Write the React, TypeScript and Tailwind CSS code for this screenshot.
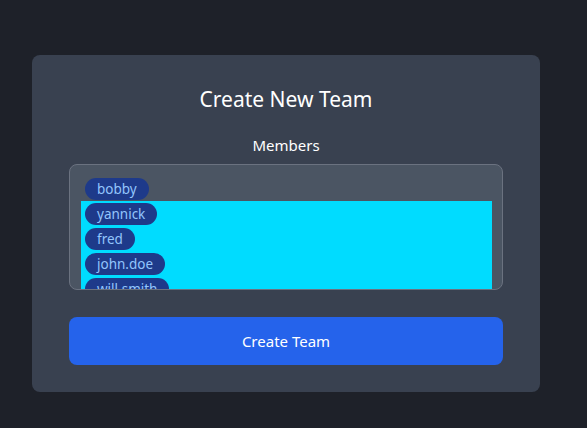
import React from 'react';

const members = ['bobby', 'yannick', 'fred', 'john.doe', 'will.smith'];

const Chip: React.FC<{ name: string }> = ({ name }) => (
  <div className="flex">
    <span className="h-[22px] px-3 rounded-full bg-[#1e3a8a] text-[#93c5fd] text-[13.5px] leading-[22px]">
      {name}
    </span>
  </div>
);

export default function App() {
  return (
    <div
      className="w-[587px] h-[428px] bg-[#1e2129] pt-[55px] pl-[32px]"
      style={{ fontFamily: '"Noto Sans", "Open Sans", sans-serif' }}
    >
      <div className="w-[508px] h-[337px] bg-[#394150] rounded-lg px-[37px] pt-[30px] flex flex-col">
        <h2 className="text-center text-white text-[21px] leading-[28px]">Create New Team</h2>
        <div className="mt-[22px] text-center text-white text-[15px] leading-[20px]">Members</div>
        <div className="mt-[9px] h-[126px] border border-[#6b7280] bg-[#4b5563] rounded-lg overflow-hidden pt-[13px] pl-[11px] pr-[10px]">
          <div className="pl-[4px]">
            <Chip name={members[0]} />
          </div>
          <div className="mt-[1px] bg-[#00dcff] pt-[2px] pl-[4px] flex flex-col gap-[3px] h-[100px]">
            {members.slice(1).map((m) => (
              <Chip key={m} name={m} />
            ))}
          </div>
        </div>
        <button className="mt-[27px] h-[48px] w-full rounded-lg bg-[#2563eb] text-white text-[15px]">
          Create Team
        </button>
      </div>
    </div>
  );
}
